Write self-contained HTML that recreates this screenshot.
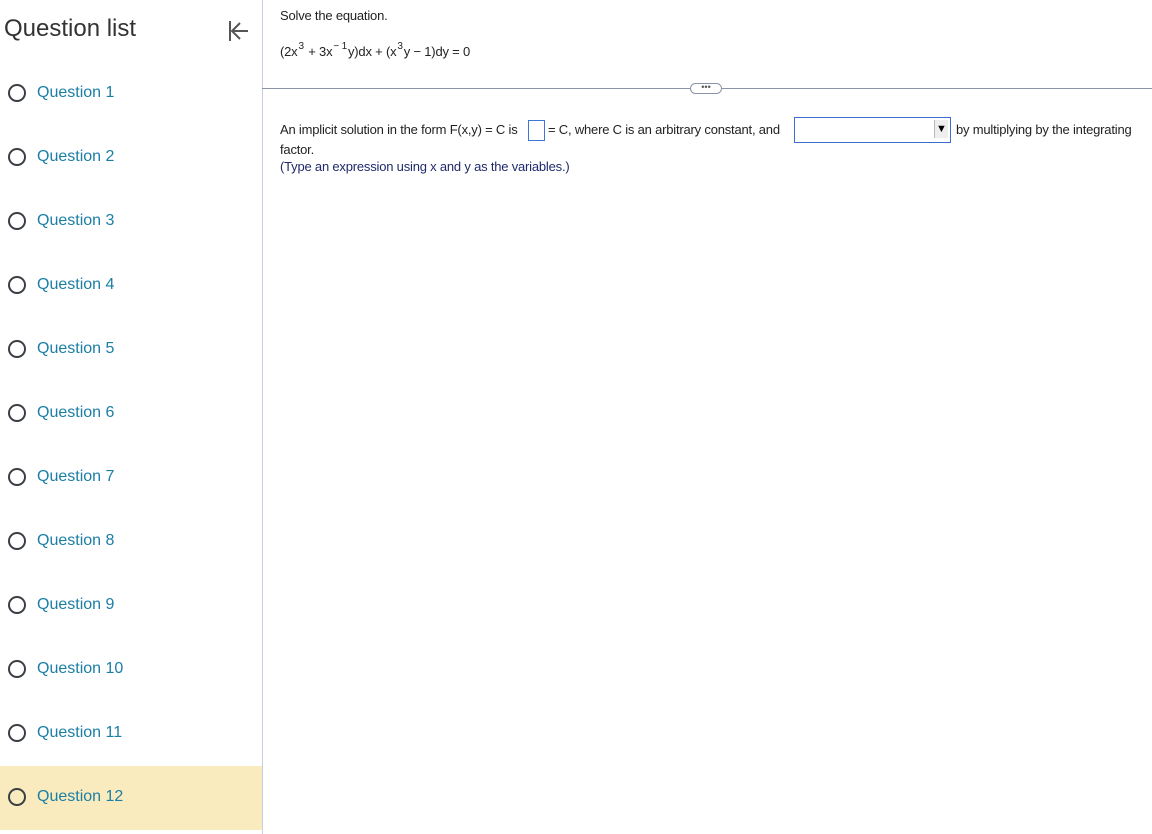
<!DOCTYPE html>
<html><head><style>
body{margin:0;width:1152px;height:834px;background:#fff;font-family:"Liberation Sans",Arial,sans-serif;position:relative;overflow:hidden}
.side{position:absolute;left:0;top:0;width:262px;height:834px;border-right:1px solid #c9d0dc}
.title{position:absolute;left:4px;top:15px;font-size:24px;color:#333}
.item{position:absolute;left:0;width:262px;height:64px}
.item .c{position:absolute;left:8px;top:22px;width:14px;height:14px;border:2px solid #3a3f45;border-radius:50%}
.item .t{position:absolute;left:37px;top:22px;font-size:16px;color:#1a7ea6}
.m{position:absolute;font-size:13px;color:#222;white-space:nowrap;letter-spacing:-0.2px}
sup{font-size:10px;position:relative;top:-3px;vertical-align:top;margin:0 1px}
</style></head><body>
<div class="side">
<div class="title">Question list</div>
<svg style="position:absolute;left:228px;top:20px" width="22" height="22" viewBox="0 0 22 22"><path d="M2 1v20M20 11H5M12 3l-8 8 8 8" stroke="#555" stroke-width="2" fill="none"/></svg>
<div class="item" style="top:62px"><div class="c"></div><div class="t">Question 1</div></div>
<div class="item" style="top:126px"><div class="c"></div><div class="t">Question 2</div></div>
<div class="item" style="top:190px"><div class="c"></div><div class="t">Question 3</div></div>
<div class="item" style="top:254px"><div class="c"></div><div class="t">Question 4</div></div>
<div class="item" style="top:318px"><div class="c"></div><div class="t">Question 5</div></div>
<div class="item" style="top:382px"><div class="c"></div><div class="t">Question 6</div></div>
<div class="item" style="top:446px"><div class="c"></div><div class="t">Question 7</div></div>
<div class="item" style="top:510px"><div class="c"></div><div class="t">Question 8</div></div>
<div class="item" style="top:574px"><div class="c"></div><div class="t">Question 9</div></div>
<div class="item" style="top:638px"><div class="c"></div><div class="t">Question 10</div></div>
<div class="item" style="top:702px"><div class="c"></div><div class="t">Question 11</div></div>
<div class="item" style="top:766px;background:#f9ebbd"><div class="c"></div><div class="t">Question 12</div></div>
</div>
<div class="m" style="left:280px;top:8px">Solve the equation.</div>
<div class="m" style="left:280px;top:44px">(2x<sup>3</sup> + 3x<sup>− 1</sup>y)dx + (x<sup>3</sup>y − 1)dy = 0</div>
<div style="position:absolute;left:262px;top:88px;width:890px;height:1px;background:#8a94a6"></div>
<div style="position:absolute;left:690px;top:83px;width:30px;height:9px;border:1px solid #8a94a6;border-radius:6px;background:#fff;font-size:9px;line-height:6px;text-align:center;color:#555">•••</div>
<div class="m" style="left:280px;top:122px">An implicit solution in the form F(x,y) = C is</div>
<div style="position:absolute;left:528px;top:120px;width:15px;height:19px;border:1px solid #3a78d4"></div>
<div class="m" style="left:548px;top:122px">= C, where C is an arbitrary constant, and</div>
<div style="position:absolute;left:794px;top:117px;width:155px;height:24px;border:1px solid #3a6fd0;background:#fff"></div>
<div style="position:absolute;left:934px;top:120px;width:13px;height:18px;background:#eee;border-left:1px solid #bbb;font-size:11px;line-height:18px;text-align:center">▼</div>
<div class="m" style="left:956px;top:122px">by multiplying by the integrating</div>
<div class="m" style="left:280px;top:142px">factor.</div>
<div class="m" style="left:280px;top:159px;color:#1f2a6b">(Type an expression using x and y as the variables.)</div>
</body></html>
